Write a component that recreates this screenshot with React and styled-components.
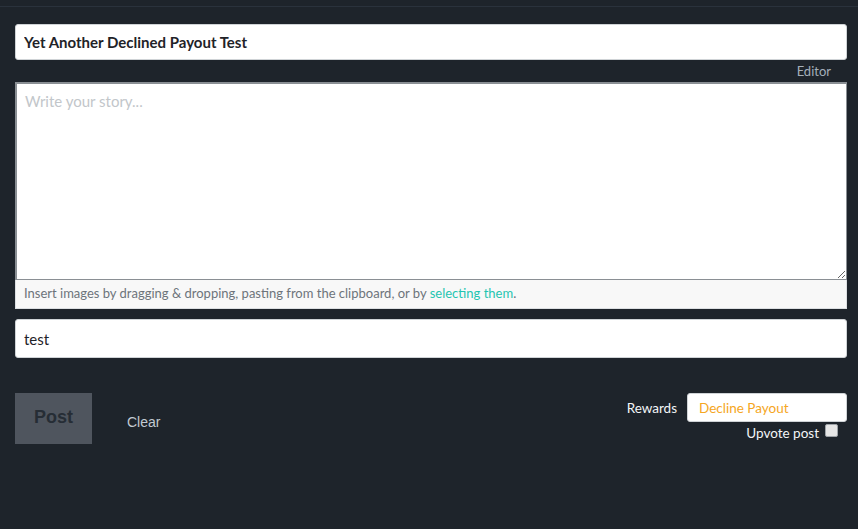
import React from "react";
import styled, { createGlobalStyle } from "styled-components";

const GlobalStyle = createGlobalStyle`
  html, body {
    margin: 0;
    padding: 0;
    background: #1e242b;
    font-family: "Source Sans Pro", Lato, "Noto Sans", sans-serif;
  }
`;

const Page = styled.div`
  min-height: 529px;
  background: #1e242b;
  border-top: 6px solid #1e242b;
  box-sizing: border-box;
`;

const TopRule = styled.div`
  height: 1px;
  background: #2a323c;
`;

const Form = styled.div`
  display: flex;
  flex-direction: column;
  padding: 17px 11px 0 15px;
`;

const TextInput = styled.input`
  box-sizing: border-box;
  width: 100%;
  height: ${(p) => p.$h || 36}px;
  border: 1px solid #cfd3d6;
  border-radius: 3px;
  background: #fff;
  padding: 0 8px;
  font-family: inherit;
  font-size: 15px;
  font-weight: ${(p) => (p.$bold ? 700 : 400)};
  color: #1f2328;
  outline: none;
`;

const EditorToggle = styled.div`
  align-self: flex-end;
  font-size: 13px;
  color: #a4afba;
  padding: 3px 16px 3px 0;
  line-height: 16px;
`;

const EditorBox = styled.div`
  display: flex;
  flex-direction: column;
`;

const StoryArea = styled.textarea`
  box-sizing: border-box;
  width: 100%;
  height: 198px;
  border: 1px solid #8a8f94;
  border-left-width: 2px;
  border-top-width: 2px;
  margin: 0;
  padding: 8px 8px;
  display: block;
  font-family: inherit;
  font-size: 15px;
  color: #333;
  background: #fff;
  outline: none;
  resize: vertical;
  &::placeholder {
    color: #c2c6ca;
  }
`;

const DropHint = styled.div`
  font-size: 13px;
  color: #6d747b;
  background: #f8f8f8;
  border: 1px solid #dcdfe2;
  border-top: none;
  padding: 5px 8px 6px;
  line-height: 17px;
`;

const Link = styled.span`
  color: #1fc5b1;
`;

const TagsWrap = styled.div`
  margin-top: 10px;
`;

const Footer = styled.div`
  display: flex;
  justify-content: space-between;
  align-items: flex-start;
  margin-top: 35px;
`;

const Left = styled.div`
  display: flex;
  align-items: center;
`;

const PostButton = styled.button`
  width: 77px;
  height: 51px;
  border: none;
  background: #4f555e;
  color: #262d35;
  font-family: "Liberation Sans", Arial, sans-serif;
  font-weight: 700;
  font-size: 18px;
  padding: 0 0 2px;
`;

const ClearButton = styled.button`
  border: none;
  background: none;
  color: #c2cad2;
  font-family: "Liberation Sans", Arial, sans-serif;
  font-size: 14px;
  margin: 6px 0 0 35px;
  padding: 0;
`;

const Right = styled.div`
  display: flex;
  flex-direction: column;
  align-items: flex-end;
`;

const RewardsRow = styled.div`
  display: flex;
  align-items: center;
  gap: 10px;
`;

const Label = styled.span`
  font-size: 13.5px;
  color: #f4f6f8;
`;

const RewardSelect = styled.div`
  box-sizing: border-box;
  width: 160px;
  height: 29px;
  background: #fff;
  border: 1px solid #cfd3d6;
  border-radius: 3px;
  color: #f5a623;
  font-size: 13.5px;
  padding: 0 11px;
  display: flex;
  align-items: center;
`;

const UpvoteRow = styled.label`
  display: flex;
  align-items: center;
  gap: 6px;
  margin-top: 3px;
  margin-right: 9px;
  font-size: 13.5px;
  color: #f4f6f8;
`;

const Check = styled.span`
  width: 11px;
  height: 11px;
  border: 1px solid #9ea3a8;
  border-radius: 2px;
  background: #e6e6e6;
  margin-top: -6px;
`;

export default function App() {
  return (
    <>
      <GlobalStyle />
      <Page>
        <TopRule />
        <Form>
          <TextInput $bold defaultValue="Yet Another Declined Payout Test" />
          <EditorToggle>Editor</EditorToggle>
          <EditorBox>
            <StoryArea placeholder="Write your story..." />
            <DropHint>
              Insert images by dragging &amp; dropping, pasting from the
              clipboard, or by <Link>selecting them</Link>.
            </DropHint>
          </EditorBox>
          <TagsWrap>
            <TextInput $h={39} defaultValue="test" />
          </TagsWrap>
          <Footer>
            <Left>
              <PostButton>Post</PostButton>
              <ClearButton>Clear</ClearButton>
            </Left>
            <Right>
              <RewardsRow>
                <Label>Rewards</Label>
                <RewardSelect>Decline Payout</RewardSelect>
              </RewardsRow>
              <UpvoteRow>
                Upvote post
                <Check />
              </UpvoteRow>
            </Right>
          </Footer>
        </Form>
      </Page>
    </>
  );
}
